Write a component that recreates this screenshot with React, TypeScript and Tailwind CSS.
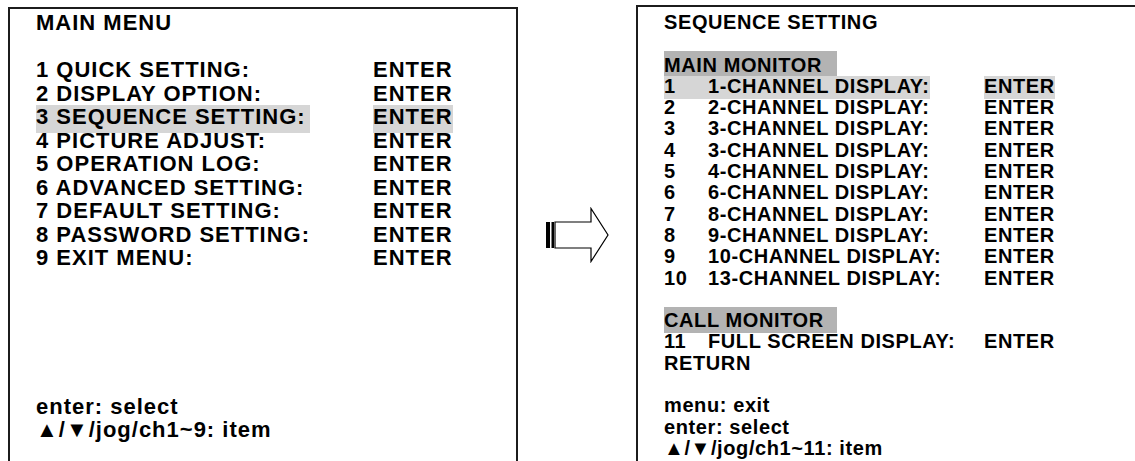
const mainItems = [
  '1 QUICK SETTING:',
  '2 DISPLAY OPTION:',
  '3 SEQUENCE SETTING:',
  '4 PICTURE ADJUST:',
  '5 OPERATION LOG:',
  '6 ADVANCED SETTING:',
  '7 DEFAULT SETTING:',
  '8 PASSWORD SETTING:',
  '9 EXIT MENU:',
]

const seqItems = [
  ['1', '1-CHANNEL DISPLAY:'],
  ['2', '2-CHANNEL DISPLAY:'],
  ['3', '3-CHANNEL DISPLAY:'],
  ['4', '3-CHANNEL DISPLAY:'],
  ['5', '4-CHANNEL DISPLAY:'],
  ['6', '6-CHANNEL DISPLAY:'],
  ['7', '8-CHANNEL DISPLAY:'],
  ['8', '9-CHANNEL DISPLAY:'],
  ['9', '10-CHANNEL DISPLAY:'],
  ['10', '13-CHANNEL DISPLAY:'],
]

function Arrow() {
  return (
    <svg width="64" height="56" viewBox="0 0 64 56">
      <path d="M10 15 H46 V1.5 L63 28 L46 54.5 V41 H10 Z" fill="#fff" stroke="#000" strokeWidth="1.2" strokeLinejoin="miter" />
      <rect x="1" y="15" width="4" height="26" fill="#000" />
      <rect x="6.5" y="15" width="2.5" height="26" fill="#000" />
    </svg>
  )
}

export default function App() {
  return (
    <div className="h-[461px] w-[1135px] overflow-hidden bg-white flex items-start font-['Liberation_Sans',Arial,sans-serif] font-bold text-black">
      {/* main menu panel */}
      <div className="ml-[8px] mt-[7px] w-[510px] h-[470px] border-2 border-b-0 border-[#1c1c1c] pl-[26px] pt-[2px] text-[22px] leading-[23.5px] tracking-[1px]">
        <div>MAIN MENU</div>
        <div className="h-[23.5px]" />
        {mainItems.map((label, i) => {
          const hl = i === 2
          return (
            <div key={i} className="flex h-[23.5px]">
              <div className="w-[337px]">
                <span className={`inline-block pr-[4px] ${hl ? 'h-[28px] bg-[#d6d6d6]' : ''}`}>{label}</span>
              </div>
              <div>
                <span className={`inline-block ${hl ? 'h-[28px] bg-[#d6d6d6]' : ''}`}>ENTER</span>
              </div>
            </div>
          )
        })}
        <div className="mt-[125px]">enter: select</div>
        <div>▲/▼/jog/ch1~9: item</div>
      </div>

      {/* arrow */}
      <div className="w-[118px] flex justify-center pt-[207px]">
        <Arrow />
      </div>

      {/* sequence setting panel */}
      <div className="mt-[5px] flex-1 h-[470px] border-l-2 border-t-2 border-[#1c1c1c] pl-[26px] pt-[5px] text-[20px] leading-[21.3px] tracking-[0.6px]">
        <div>SEQUENCE SETTING</div>
        <div className="h-[21.3px]" />
        <div className="-mt-[4px] pt-[4px] w-[173px] bg-[#b3b3b3]">MAIN MONITOR</div>
        {seqItems.map(([n, label], i) => {
          const hl = i === 0
          return (
            <div key={i} className="flex h-[21.3px]">
              <div className="w-[320px]">
                <div className={`inline-flex ${hl ? 'h-[23px] bg-[#d6d6d6]' : ''}`}>
                  <span className="w-[44px]">{n}</span>
                  <span>{label}</span>
                </div>
              </div>
              <div>
                <span className={`inline-block ${hl ? 'h-[23px] bg-[#d6d6d6]' : ''}`}>ENTER</span>
              </div>
            </div>
          )
        })}
        <div className="h-[21.3px]" />
        <div className="-mt-[3px] pt-[3px] -mb-[2px] pb-[2px] w-[173px] bg-[#b3b3b3]">CALL MONITOR</div>
        <div className="flex">
          <div className="w-[320px] flex">
            <span className="w-[44px]">11</span>
            <span>FULL SCREEN DISPLAY:</span>
          </div>
          <span>ENTER</span>
        </div>
        <div>RETURN</div>
        <div className="h-[21.3px]" />
        <div>menu: exit</div>
        <div>enter: select</div>
        <div>▲/▼/jog/ch1~11: item</div>
      </div>
    </div>
  )
}
